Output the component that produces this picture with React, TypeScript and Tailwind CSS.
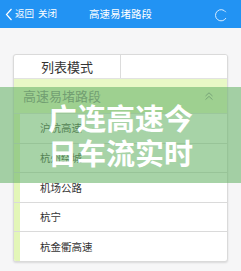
import React from "react";

const rows = ["沪杭高速", "杭州绕城", "机场公路", "杭宁", "杭金衢高速"];

export default function App() {
  return (
    <div
      className="relative w-[241px] h-[271px] overflow-hidden bg-[#f6f6f7]"
      style={{ fontFamily: '"Noto Sans CJK SC", "Noto Sans", sans-serif' }}
    >
      <div className="relative flex h-[28px] items-center bg-[#2293f3] text-white">
        <div className="flex items-center pl-[5px]">
          <svg width="8" height="13" viewBox="0 0 8 13" className="mr-[2px]">
            <path d="M6.5 1 L1.5 6.5 L6.5 12" fill="none" stroke="white" strokeWidth="1.2" />
          </svg>
          <span className="text-[9.5px] leading-none">返回</span>
          <span className="ml-[4px] text-[9.5px] leading-none">关闭</span>
        </div>
        <div className="absolute left-[89px] top-0 flex h-[28px] items-center text-[10.5px]">高速易堵路段</div>
        <svg width="14" height="14" viewBox="0 0 14 14" className="absolute left-[214px] top-[8px]">
          <path d="M11.8 4.2 A5.6 5.6 0 1 0 12 10" fill="none" stroke="#d6ebff" strokeWidth="1" />
        </svg>
      </div>

      <div className="mx-[13px] mt-[26px] overflow-hidden rounded-[3px] border border-[#dadada] bg-white shadow-[0_1px_2px_rgba(0,0,0,0.12)]">
        <div className="flex h-[24px] border-b border-[#e2e2e2]">
          <div className="flex w-[107px] items-center justify-center border-r border-[#dcdcdc] text-[13px] text-[#333]">列表模式</div>
          <div className="flex-1 bg-white" />
        </div>
        <div className="flex h-[34px] items-center justify-between bg-[#e8f8c6] pl-[9px] pr-[13px]">
          <span className="text-[13px] text-[#7a7a7a]">高速易堵路段</span>
          <svg width="10" height="10" viewBox="0 0 10 10">
            <path d="M1.5 5 L5 1.8 L8.5 5 M1.5 8.6 L5 5.4 L8.5 8.6" fill="none" stroke="#8a8a8a" strokeWidth="1" />
          </svg>
        </div>
        {rows.map((r, i) => (
          <div key={r} className={`flex h-[29.6px] ${i > 0 ? "border-t border-[#dadada]" : "border-t border-[#e0e0e0]"}`}>
            <div className="w-[6px] bg-[#e3f6b8]" />
            <div className="flex flex-1 items-center pl-[20px] text-[10.5px] text-[#333]">{r}</div>
          </div>
        ))}
      </div>

      <div className="absolute inset-x-0 top-[87px] flex h-[96px] flex-col items-center justify-center bg-[#6cb56c]/60">
        <div className="text-[29px] font-bold leading-[35px] text-white">广连高速今</div>
        <div className="text-[29px] font-bold leading-[35px] text-white">日车流实时</div>
      </div>
    </div>
  );
}
